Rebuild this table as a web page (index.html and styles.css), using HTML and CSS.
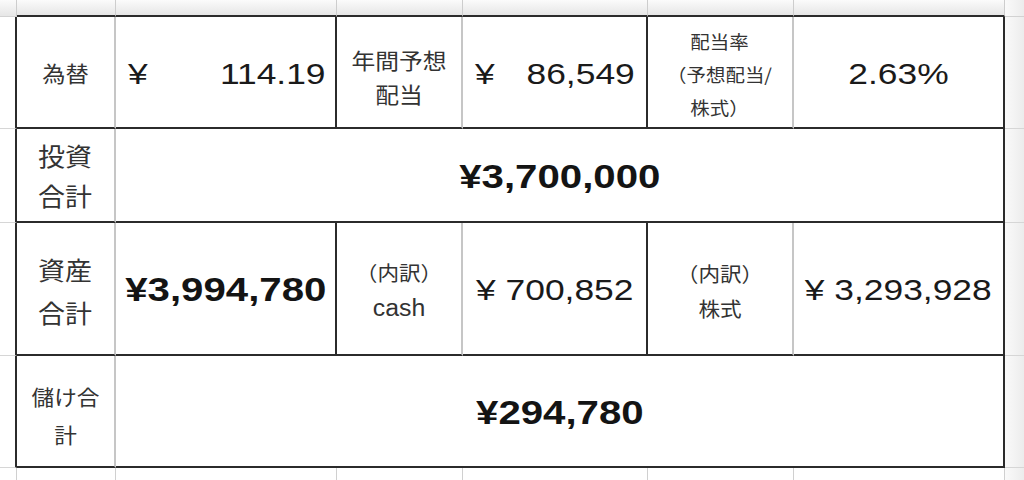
FILE: index.html
```html
<!DOCTYPE html>
<html lang="ja">
<head>
<meta charset="utf-8">
<title>配当</title>
<link rel="stylesheet" href="styles.css">
</head>
<body>
<div class="sheet">
  <div class="hd m"></div>
  <div class="hd t"></div>
  <div class="hd t"></div>
  <div class="hd t"></div>
  <div class="hd t"></div>
  <div class="hd t"></div>
  <div class="hd t"></div>
  <div class="hd m r"></div>

  <div class="mg l"></div>
  <div class="c lab g r1"><span class="tx fx1">為替</span></div>
  <div class="c num split k"><span class="n nl">¥</span><span class="n nr">114.19</span></div>
  <div class="c lab g"><span class="tx fx2">年間予想<br>配当</span></div>
  <div class="c num split k pr11"><span class="n nl">¥</span><span class="n nr">86,549</span></div>
  <div class="c lab g"><span class="tx fx3">配当率<br>（予想配当/<br>株式）</span></div>
  <div class="c num k"><span class="n">2.63%</span></div>
  <div class="mg r"></div>

  <div class="mg l"></div>
  <div class="c lab g"><span class="tx fx4">投資<br>合計</span></div>
  <div class="c big k span5"><span class="n">¥3,700,000</span></div>
  <div class="mg r"></div>

  <div class="mg l"></div>
  <div class="c lab g"><span class="tx fx4 r3">資産<br>合計</span></div>
  <div class="c big k"><span class="n">¥3,994,780</span></div>
  <div class="c lab g"><span class="tx fx5">（内訳）<br><span class="latin">cash</span></span></div>
  <div class="c num k"><span class="n">¥ 700,852</span></div>
  <div class="c lab g"><span class="tx fx5">（内訳）<br>株式</span></div>
  <div class="c num k"><span class="n">¥ 3,293,928</span></div>
  <div class="mg r"></div>

  <div class="mg l"></div>
  <div class="c lab g"><span class="tx fx6">儲け合<br>計</span></div>
  <div class="c big k span5"><span class="n">¥294,780</span></div>
  <div class="mg r"></div>

  <div class="ft m"></div>
  <div class="ft"></div>
  <div class="ft"></div>
  <div class="ft"></div>
  <div class="ft"></div>
  <div class="ft"></div>
  <div class="ft"></div>
  <div class="ft r"></div>
</div>
</body>
</html>
```

FILE: styles.css
```css
* {
  box-sizing: border-box;
  margin: 0;
  padding: 0;
}

html,
body {
  width: 1024px;
  height: 480px;
  overflow: hidden;
  background: #ffffff;
}

body {
  font-family: "Liberation Sans", "DejaVu Sans", sans-serif;
  color: #1c1c1c;
}

.sheet {
  display: grid;
  grid-template-columns: 17px 99px 221px 126px 185px 146px 211px 19px;
  grid-template-rows: 17px 112px 94px 133px 112px 12px;
  width: 1024px;
  height: 480px;
}

/* spreadsheet header strip */
.hd {
  background: linear-gradient(#fbfbfb, #e6e6e6);
  border-right: 1px solid #cdcdcd;
}

.hd.t {
  border-bottom: 2px solid #2b2b2b;
}

.hd.m {
  border-bottom: 1px solid #d2d2d2;
}

/* margins around the table */
.mg {
  border-bottom: 1px solid #d6d6d6;
}

.mg.l {
  border-right: 2px solid #2b2b2b;
}

.mg.r,
.hd.r,
.ft.r {
  background: linear-gradient(90deg, #fafafa, #ececec);
  border-right: none;
}

.ft {
  border-right: 1px solid #d0d0d0;
}

/* table cells */
.c {
  display: flex;
  align-items: center;
  justify-content: center;
  text-align: center;
  border-bottom: 2px solid #2b2b2b;
  white-space: nowrap;
}

.g {
  border-right: 2px solid #c6c6c6;
}

.k {
  border-right: 2px solid #2b2b2b;
}

.span5 {
  grid-column: span 5;
}

.lab {
  font-family: "Noto Sans CJK JP", "Noto Sans", sans-serif;
  color: #333333;
}

.tx {
  display: inline-block;
  transform: scaleX(1.08);
}

.fx1 {
  font-size: 21.5px;
  line-height: 30px;
  padding-top: 2px;
}

.fx2 {
  font-size: 22px;
  line-height: 34px;
  padding-top: 8px;
}

.fx3 {
  font-size: 18px;
  line-height: 33px;
  padding-top: 4px;
}

.fx4 {
  font-size: 25px;
  line-height: 40px;
}

.fx4.r3 {
  line-height: 43px;
  padding-top: 4px;
}

.fx5 {
  font-size: 20px;
  line-height: 35px;
  padding-top: 4px;
}

.fx6 {
  font-size: 21px;
  line-height: 38px;
  padding-top: 8px;
}

.latin {
  font-family: "Liberation Sans", sans-serif;
  font-size: 23px;
}

/* numbers: Helvetica-like digits, widened like the reference */
.n {
  display: inline-block;
  transform: scaleX(1.18);
}

.nl {
  transform-origin: left center;
}

.nr {
  transform-origin: right center;
}

.num {
  font-size: 30px;
  padding-top: 3px;
  color: #1a1a1a;
}

.split {
  justify-content: space-between;
  padding-left: 12px;
  padding-right: 9px;
}

.pr11 {
  padding-right: 11px;
}

.big {
  font-weight: 700;
  font-size: 33.5px;
  padding-top: 3px;
  color: #141414;
}

.big .n {
  transform: scaleX(1.2);
}
```
